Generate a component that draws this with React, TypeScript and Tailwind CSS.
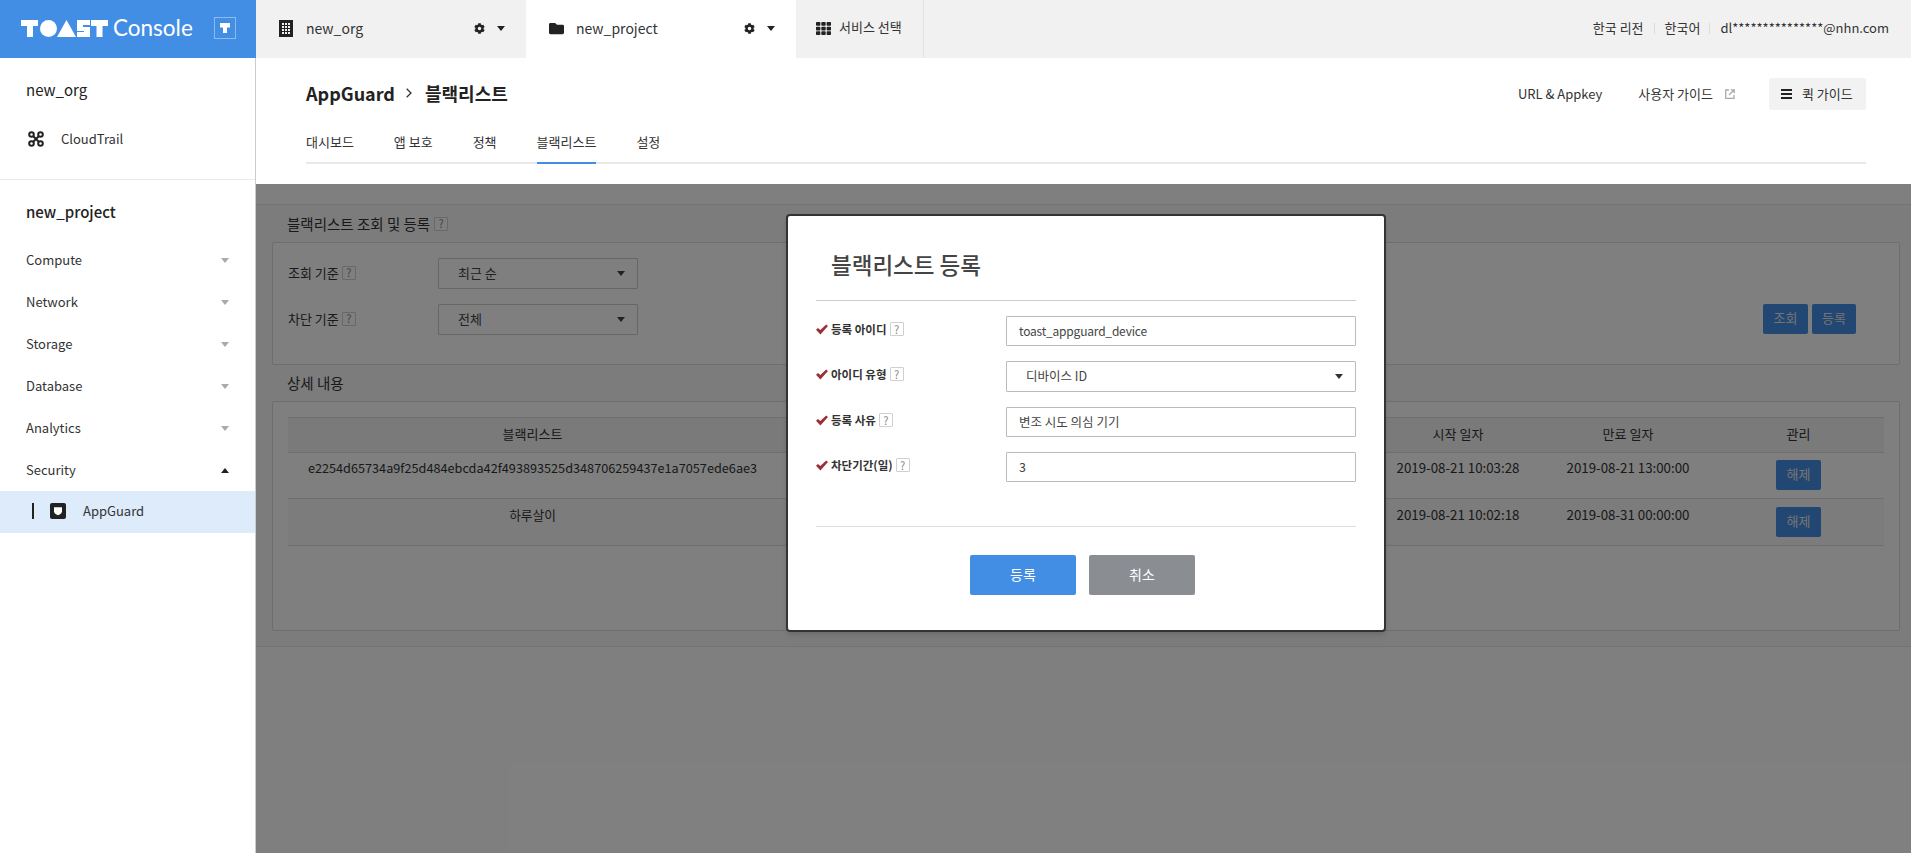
import { FaCog, FaFolder, FaTh } from "react-icons/fa";

const font = { fontFamily: '"Noto Sans CJK KR", "Noto Sans", sans-serif' };

const Caret = ({ className = "" }: { className?: string }) => (
  <svg viewBox="0 0 8 5" className={`w-2 h-[5px] fill-current ${className}`}>
    <path d="M0 0h8L4 5z" />
  </svg>
);

const Help = () => (
  <span className="inline-flex items-center justify-center w-[14px] h-[14px] border border-[#d0d0d0] rounded-[1px] bg-white text-[11px] leading-none text-[#888] font-normal shrink-0">
    ?
  </span>
);

const Check = () => (
  <svg viewBox="0 0 12 10" className="w-3 h-[11px] fill-[#9b2f38] shrink-0">
    <path d="M0 5.200 2 3.400 4.300 5.600 10.200 0 12 1.600 4.400 10z" />
  </svg>
);

const ToastLogo = () => (
  <svg viewBox="0 0 87 17" className="w-[87px] h-[17px] fill-white">
    <path d="M0 0h17v6h-5v11H6V6H0z" />
    <circle cx="27.500" cy="8.500" r="8.500" />
    <path d="M45.500 0 55 17H36z" />
    <path d="M56 0h13v5h-7v2h7v10H56v-5h7v-1h-7z" />
    <path d="M70 0h17v6h-5.500v11h-6V6H70z" />
  </svg>
);

const OrgIcon = () => (
  <svg viewBox="0 0 14 17" className="w-[14px] h-[17px]">
    <rect width="14" height="17" fill="#222" />
    <g fill="#f1f1f1">
      <rect x="3" y="3" width="2" height="2" />
      <rect x="6" y="3" width="2" height="2" />
      <rect x="9" y="3" width="2" height="2" />
      <rect x="3" y="6" width="2" height="2" />
      <rect x="6" y="6" width="2" height="2" />
      <rect x="9" y="6" width="2" height="2" />
      <rect x="3" y="9" width="2" height="2" />
      <rect x="6" y="9" width="2" height="2" />
      <rect x="9" y="9" width="2" height="2" />
      <rect x="3" y="12" width="2" height="2" />
      <rect x="6" y="12" width="2" height="2" />
      <rect x="9" y="12" width="2" height="2" />
    </g>
  </svg>
);

const TrailIcon = () => (
  <svg viewBox="0 0 16 16" className="w-4 h-4 fill-none stroke-[#222] stroke-2">
    <circle cx="3.500" cy="3.500" r="2.300" />
    <circle cx="12.500" cy="3.500" r="2.300" />
    <circle cx="3.500" cy="12.500" r="2.300" />
    <circle cx="12.500" cy="12.500" r="2.300" />
    <path d="M5.500 5.500 10.500 10.500M10.500 5.500 5.500 10.500" />
  </svg>
);

const ShieldIcon = () => (
  <svg viewBox="0 0 16 16" className="w-4 h-4">
    <rect width="16" height="16" rx="2" fill="#222" />
    <path d="M4 4.200h8v4c0 2-1.800 3.300-4 4-2.200-.7-4-2-4-4z" fill="#fff" />
  </svg>
);

const ExternalIcon = () => (
  <svg viewBox="0 0 10 10" className="w-[10px] h-[10px] fill-none stroke-[#aaa]">
    <path d="M4 1H.7v8.300H9V6" strokeWidth="1.300" />
    <path d="M4 6 9 1M5.800.8h3.400v3.400" strokeWidth="1.300" />
  </svg>
);

const sideItems = ["Compute", "Network", "Storage", "Database", "Analytics"];

const Sidebar = () => (
  <aside className="w-[256px] shrink-0 bg-white border-r border-[#ccc] text-[#222]">
    <div className="pt-[12px] pl-[26px] h-[54px] leading-[40px] text-[15px]">new_org</div>
    <div className="mt-[6px] h-[42px] pl-[28px] flex items-center gap-[17px] text-[13px] text-[#333]">
      <TrailIcon />
      CloudTrail
    </div>
    <div className="mt-[19px] border-t border-[#eaeaea]" />
    <div className="pt-[12px] pl-[26px] h-[54px] leading-[40px] text-[15px] font-medium">new_project</div>
    <div className="mt-[5px]">
      {sideItems.map((name) => (
        <div key={name} className="h-[42px] px-[26px] flex items-center justify-between text-[13px] text-[#333]">
          {name}
          <Caret className="text-[#aaa]" />
        </div>
      ))}
      <div className="h-[42px] px-[26px] flex items-center justify-between text-[13px] text-[#333]">
        Security
        <Caret className="text-[#222] rotate-180" />
      </div>
      <div className="h-[42px] pb-[2px] bg-[#ddebfb] flex items-center pl-[32px] text-[13px] text-[#333]">
        <span className="w-[2px] h-[16px] bg-[#222] mr-[16px]" />
        <ShieldIcon />
        <span className="ml-[17px]">AppGuard</span>
      </div>
    </div>
  </aside>
);

const Header = () => (
  <header className="h-[58px] flex bg-[#f1f1f1] text-[#333]">
    <div className="w-[256px] shrink-0 pb-[2px] bg-[#428ee4] flex items-center pl-[21px] text-white">
      <ToastLogo />
      <span className="ml-[5px] text-[22.500px] leading-none" style={{ fontFamily: "Lato, sans-serif" }}>
        Console
      </span>
      <span className="ml-[21px] w-[22px] h-[22px] border border-white/40 flex items-center justify-center">
        <svg viewBox="0 0 10 10" className="w-[10px] h-[10px] fill-white">
          <path d="M0 0h10v4.500H7V10H3V4.500H0z" />
        </svg>
      </span>
    </div>
    <div className="w-[270px] pb-[2px] flex items-center pl-[23px] pr-[21px] text-[14px]">
      <OrgIcon />
      <span className="ml-[13px] flex-1">new_org</span>
      <FaCog className="w-[11px] h-[11px] text-[#222] -ml-[1px]" />
      <Caret className="ml-[12px] text-[#222]" />
    </div>
    <div className="w-[270px] pb-[2px] flex items-center pl-[23px] pr-[21px] text-[14px] bg-white">
      <FaFolder className="w-[15px] h-[15px] text-[#222]" />
      <span className="ml-[12px] flex-1">new_project</span>
      <FaCog className="w-[11px] h-[11px] text-[#222] -ml-[1px]" />
      <Caret className="ml-[12px] text-[#222]" />
    </div>
    <div className="w-[128px] pb-[2px] flex items-center pl-[20px] text-[13px] border-r border-[#e2e2e2]">
      <FaTh className="w-[15px] h-[15px] text-[#222]" />
      <span className="ml-[8px] pb-[2px]">서비스 선택</span>
    </div>
    <div className="flex-1 pb-[2px] flex items-center justify-end pr-[22px] text-[13px]">
      <span>한국 리전</span>
      <span className="mx-[10px] w-px h-[11px] bg-[#ddd]" />
      <span>한국어</span>
      <span className="ml-[9px] mr-[10px] w-px h-[11px] bg-[#ddd]" />
      <span>dl***************@nhn.com</span>
    </div>
  </header>
);

const tabs = ["대시보드", "앱 보호", "정책", "블랙리스트", "설정"];

const PageHead = () => (
  <div className="pl-[50px] pr-[45px] pb-[20px] bg-white text-[#333]">
    <div className="h-[52px] pt-[20px] flex items-center justify-between">
      <div className="flex items-center pb-[2px] text-[18px] font-bold text-[#222]">
        AppGuard
        <svg viewBox="0 0 6 10" className="ml-[11px] mr-[13px] w-[6px] h-[10px] fill-none stroke-[#333] stroke-[1.300]">
          <path d="M.7.7 5 5 .7 9.300" />
        </svg>
        블랙리스트
      </div>
      <div className="flex items-center text-[13px]">
        <span>URL &amp; Appkey</span>
        <span className="ml-[36px]">사용자 가이드</span>
        <span className="ml-[12px]">
          <ExternalIcon />
        </span>
        <div className="ml-[34px] w-[97px] h-[32px] rounded-[2px] bg-[#f2f2f2] flex items-center pl-[12px]">
          <span className="w-[11px] h-[10px] border-y-2 border-[#222] flex items-center">
            <span className="w-full h-[2px] bg-[#222]" />
          </span>
          <span className="ml-[10px]">퀵 가이드</span>
        </div>
      </div>
    </div>
    <div className="flex gap-[40px] border-b-2 border-[#e8e8e8] text-[13px]">
      {tabs.map((tab) => (
        <span
          key={tab}
          className={`pt-[20px] pb-[8px] leading-[24px] -mb-[2px] border-b-2 ${tab === "블랙리스트" ? "border-[#428ee4]" : "border-transparent"}`}
        >
          {tab}
        </span>
      ))}
    </div>
  </div>
);

const SelectBox = ({ label, value }: { label: string; value: string }) => (
  <div className="flex items-center">
    <span className="w-[165px] flex items-center gap-[3px] pl-[15px] pb-[2px]">
      {label} <Help />
    </span>
    <div className="w-[200px] h-[31px] border border-[#ccc] rounded-[1px] bg-white flex items-center justify-between pl-[19px] pr-[12px] text-[#444]">
      <span className="pb-[2px]">{value}</span>
      <Caret className="text-[#444]" />
    </div>
  </div>
);

const rows = [
  { id: "e2254d65734a9f25d484ebcda42f493893525d348706259437e1a7057ede6ae3", start: "2019-08-21 10:03:28", end: "2019-08-21 13:00:00", row: "h-[46px] bg-white", text: "pt-[5px]", btn: "pt-[7px]" },
  { id: "하루살이", start: "2019-08-21 10:02:18", end: "2019-08-31 00:00:00", row: "h-[47px] bg-[#f8f8f8]", text: "pt-[6px]", btn: "pt-[8px]" },
];

const Content = () => (
  <div className="mt-[20px] h-[443px] bg-[#f8f8f8] border-y border-[#e6e6e6] pl-[16px] pr-[11px] text-[13px] text-[#333]">
    <div className="h-[37px] flex items-center gap-[4px] pl-[15px] text-[14.500px]">
      블랙리스트 조회 및 등록 <Help />
    </div>
    <div className="h-[123px] bg-white border border-[#ddd] rounded-[2px] pt-[15px]">
      <div className="flex flex-col gap-[15px]">
        <SelectBox label="조회 기준" value="최근 순" />
        <SelectBox label="차단 기준" value="전체" />
      </div>
      <div className="flex gap-[4px] justify-end pr-[43px] -mt-[31px]">
        <span className="w-[45px] h-[30px] pb-[2px] rounded-[2px] bg-[#428ee4] flex items-center justify-center text-[#e8e8e8]">조회</span>
        <span className="w-[44px] h-[30px] pb-[2px] rounded-[2px] bg-[#428ee4] flex items-center justify-center text-[#e8e8e8]">등록</span>
      </div>
    </div>
    <div className="h-[36px] flex items-center pl-[15px] text-[14.500px]">상세 내용</div>
    <div className="h-[230px] bg-white border border-[#ddd] rounded-[2px] pt-[15px] px-[15px]">
      <div className="grid grid-cols-[489px_1fr_170px_170px_171px] h-[36px] pb-[3px] items-center text-center bg-[#f4f4f4] border-y border-[#ddd]">
        <span>블랙리스트</span>
        <span />
        <span>시작 일자</span>
        <span>만료 일자</span>
        <span>관리</span>
      </div>
      {rows.map((row) => (
        <div key={row.start} className={`grid grid-cols-[489px_1fr_170px_170px_171px] text-center border-b border-[#ddd] ${row.row}`}>
          <span className={`text-[12.700px] ${row.text}`}>{row.id}</span>
          <span />
          <span className={`text-[13.300px] ${row.text}`}>{row.start}</span>
          <span className={`text-[13.300px] ${row.text}`}>{row.end}</span>
          <span className={row.btn}>
            <span className="inline-flex w-[45px] h-[30px] pb-[2px] rounded-[2px] bg-[#428ee4] items-center justify-center text-[#e8e8e8]">해제</span>
          </span>
        </div>
      ))}
    </div>
  </div>
);

const FormRow = ({ label, children }: { label: string; children: React.ReactNode }) => (
  <div className="flex items-start">
    <div className="w-[190px] h-[27px] flex items-center font-bold text-[11.500px] text-[#333]">
      <Check />
      <span className="ml-[3px]">{label}</span>
      <span className="ml-[3px]"><Help /></span>
    </div>
    {children}
  </div>
);

const Field = ({ children }: { children: React.ReactNode }) => (
  <div className="w-[350px] h-[30px] border border-[#bbb] rounded-[1px] flex items-center pl-[12px] text-[12.500px] text-[#444]">{children}</div>
);

const Modal = () => (
  <div className="absolute left-[530px] top-[30px] w-[600px] h-[418px] bg-white border-2 border-[#333] rounded-[4px] shadow-md px-[28px] text-[#333]">
    <div className="h-[85px] pt-[14px] border-b border-[#ccc] flex items-center pl-[15px] text-[22.500px] font-medium text-[#444]">
      블랙리스트 등록
    </div>
    <div className="pt-[15px] flex flex-col gap-[15px]">
      <FormRow label="등록 아이디">
        <Field>
          <span className="text-[12px] tracking-[-0.2px]">toast_appguard_device</span>
        </Field>
      </FormRow>
      <FormRow label="아이디 유형">
        <div className="w-[350px] h-[31px] border border-[#bbb] rounded-[1px] flex items-center justify-between pl-[19px] pr-[12px] text-[12.500px] text-[#444]">
          디바이스 ID
          <Caret className="text-[#333]" />
        </div>
      </FormRow>
      <FormRow label="등록 사유">
        <Field>변조 시도 의심 기기</Field>
      </FormRow>
      <FormRow label="차단기간(일)">
        <Field>3</Field>
      </FormRow>
    </div>
    <div className="mt-[44px] border-t border-[#ddd]" />
    <div className="mt-[28px] pr-[7px] flex justify-center gap-[13px] text-[14px] text-white">
      <span className="w-[106px] h-[40px] pb-[2px] rounded-[2px] bg-[#428ee4] flex items-center justify-center">등록</span>
      <span className="w-[106px] h-[40px] pb-[2px] rounded-[2px] bg-[#8a8d92] flex items-center justify-center">취소</span>
    </div>
  </div>
);

const App = () => (
  <div className="h-[853px] overflow-hidden flex flex-col bg-white" style={font}>
    <Header />
    <div className="flex flex-1 min-h-0">
      <Sidebar />
      <main className="flex-1 flex flex-col min-w-0">
        <PageHead />
        <div className="relative flex-1">
          <Content />
          <div className="absolute inset-0 bg-black/50">
            <Modal />
          </div>
        </div>
      </main>
    </div>
  </div>
);

export default App;
